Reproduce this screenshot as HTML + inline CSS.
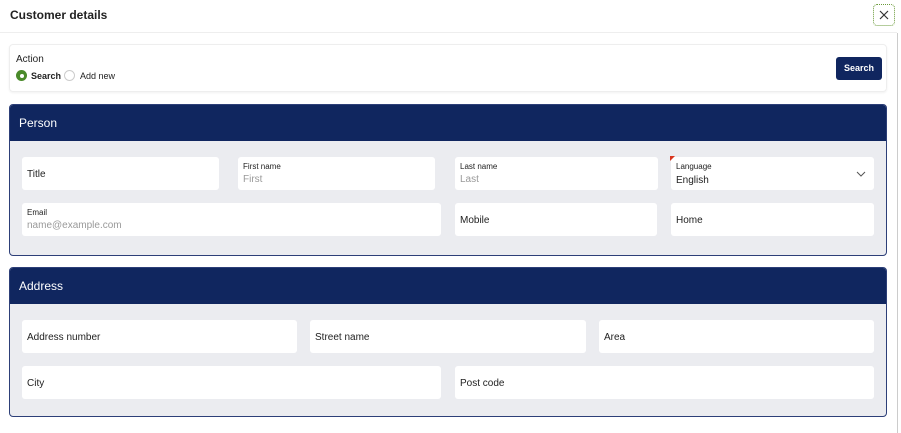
<!DOCTYPE html>
<html><head><style>
*{box-sizing:border-box;margin:0;padding:0}
body{width:901px;height:433px;background:#fff;font-family:"Liberation Sans",sans-serif;position:relative;overflow:hidden;color:#222}
.a{position:absolute}
.f{position:absolute;background:#fff;border-radius:3px;font-size:10px;color:#222}
.f .t{position:absolute;left:5px;top:12px}
.f .l{position:absolute;left:5px;top:5px;font-size:8px}
.f .p{position:absolute;left:5px;top:17px;font-size:10px;color:#999}
.box{position:absolute;left:9px;width:878px;background:#ebecf0;border:1px solid #2d3f78;border-radius:4px;overflow:hidden}
.hd{height:36px;background:#10265f;color:#fff;font-size:12px;padding:11px 0 0 9px}
</style></head><body>
<div class="a" style="left:10px;top:8px;font-size:12px;font-weight:bold;color:#222">Customer details</div>
<div class="a" style="left:873px;top:4px;width:22px;height:22px;border:1px dotted #6a9a3a;border-radius:4px"><svg width="20" height="20" style="position:absolute;left:0;top:0"><path d="M6 6L14 14M14 6L6 14" stroke="#333" stroke-width="1.2"/></svg></div>
<div class="a" style="left:0;top:32px;width:897px;height:1px;background:#eee"></div>
<div class="a" style="left:897px;top:33px;width:1px;height:400px;background:#ccc"></div>
<div class="a" style="left:9px;top:44px;width:878px;height:48px;border:1px solid #eee;border-radius:4px;box-shadow:0 1px 2px rgba(0,0,0,.06)">
 <div class="a" style="left:6px;top:9px;font-size:10px">Action</div>
 <div class="a" style="left:6px;top:25px;width:11px;height:11px;border-radius:50%;background:#4a8a2a"><div style="margin:3.5px;width:4px;height:4px;background:#fff;border-radius:50%"></div></div>
 <div class="a" style="left:21px;top:26px;font-size:9px;font-weight:bold">Search</div>
 <div class="a" style="left:54px;top:25px;width:11px;height:11px;border-radius:50%;border:1px solid #ccc"></div>
 <div class="a" style="left:70px;top:26px;font-size:9px">Add new</div>
 <div class="a" style="left:826px;top:12px;width:46px;height:23px;background:#10265f;border-radius:3px;color:#fff;font-size:9px;font-weight:bold;text-align:center;line-height:23px">Search</div>
</div>
<div class="box" style="top:104px;height:152px">
 <div class="hd">Person</div>
</div>
<div class="f" style="left:22px;top:157px;width:197px;height:33px"><span class="t">Title</span></div>
<div class="f" style="left:238px;top:157px;width:197px;height:33px"><span class="l">First name</span><span class="p">First</span></div>
<div class="f" style="left:455px;top:157px;width:203px;height:33px"><span class="l">Last name</span><span class="p">Last</span></div>
<div class="f" style="left:671px;top:157px;width:203px;height:33px"><span class="l">Language</span><span class="p" style="color:#222;top:18px">English</span><svg width="10" height="6" style="position:absolute;right:8px;top:14px"><path d="M1 1L5 5L9 1" fill="none" stroke="#555" stroke-width="1"/></svg><div style="position:absolute;left:-1px;top:-1px;width:0;height:0;border-top:5px solid #d9361e;border-right:5px solid transparent"></div></div>
<div class="f" style="left:22px;top:203px;width:419px;height:33px"><span class="l">Email</span><span class="p">name@example.com</span></div>
<div class="f" style="left:455px;top:203px;width:202px;height:33px"><span class="t">Mobile</span></div>
<div class="f" style="left:671px;top:203px;width:203px;height:33px"><span class="t">Home</span></div>
<div class="box" style="top:267px;height:150px">
 <div class="hd">Address</div>
</div>
<div class="f" style="left:22px;top:320px;width:275px;height:33px"><span class="t">Address number</span></div>
<div class="f" style="left:310px;top:320px;width:276px;height:33px"><span class="t">Street name</span></div>
<div class="f" style="left:599px;top:320px;width:275px;height:33px"><span class="t">Area</span></div>
<div class="f" style="left:22px;top:366px;width:419px;height:33px"><span class="t">City</span></div>
<div class="f" style="left:455px;top:366px;width:419px;height:33px"><span class="t">Post code</span></div>
</body></html>
